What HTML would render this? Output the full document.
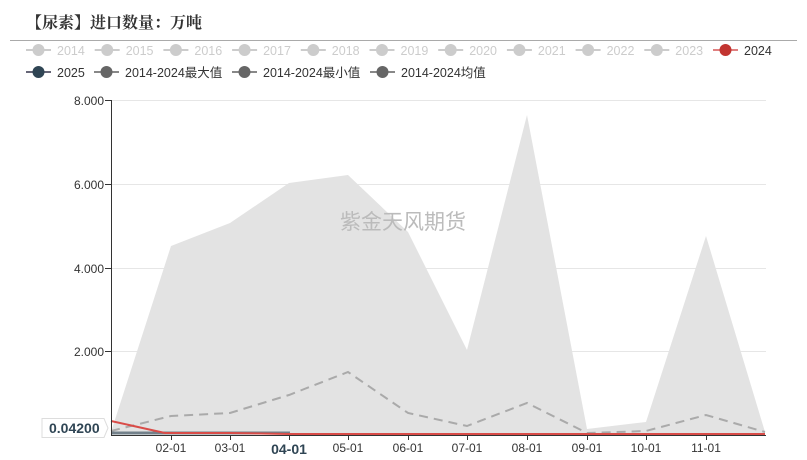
<!DOCTYPE html>
<html><head><meta charset="utf-8"><style>
body{margin:0;background:#fff;width:807px;height:460px;overflow:hidden}
svg{display:block;font-family:"Liberation Sans","Noto Sans CJK SC",sans-serif}
</style></head><body>
<svg width="807" height="460" viewBox="0 0 807 460">
<text x="26" y="28" font-size="16" font-weight="bold" fill="#333" font-family="Liberation Serif,Noto Serif CJK SC,serif">【尿素】进口数量：万吨</text>
<line x1="10" y1="40.5" x2="797" y2="40.5" stroke="#aaa" stroke-width="1"/>
<g font-size="12.5" fill="#ccc">
<g id="li"><line x1="26" y1="50" x2="51" y2="50" stroke="#ccc" stroke-width="2"/><circle cx="38.5" cy="50" r="6" fill="#ccc"/></g>
<text x="57" y="55">2014</text>
<use href="#li" x="68.7"/><text x="125.7" y="55">2015</text>
<use href="#li" x="137.4"/><text x="194.4" y="55">2016</text>
<use href="#li" x="206.1"/><text x="263.1" y="55">2017</text>
<use href="#li" x="274.8"/><text x="331.8" y="55">2018</text>
<use href="#li" x="343.5"/><text x="400.5" y="55">2019</text>
<use href="#li" x="412.2"/><text x="469.2" y="55">2020</text>
<use href="#li" x="480.9"/><text x="537.9" y="55">2021</text>
<use href="#li" x="549.6"/><text x="606.6" y="55">2022</text>
<use href="#li" x="618.3"/><text x="675.3" y="55">2023</text>
<line x1="713" y1="50" x2="738" y2="50" stroke="#e08080" stroke-width="2"/><circle cx="725.5" cy="50" r="6" fill="#c23531"/>
<text x="744" y="55" fill="#333">2024</text>
</g>
<g font-size="12.5" fill="#333">
<line x1="26" y1="72" x2="51" y2="72" stroke="#667" stroke-width="2"/><circle cx="38.5" cy="72" r="6" fill="#2f4554"/><text x="57" y="77">2025</text>
<line x1="94" y1="72" x2="119" y2="72" stroke="#888" stroke-width="2"/><circle cx="106.5" cy="72" r="6" fill="#666"/><text x="125" y="77">2014-2024最大值</text>
<line x1="232" y1="72" x2="257" y2="72" stroke="#888" stroke-width="2"/><circle cx="244.5" cy="72" r="6" fill="#666"/><text x="263" y="77">2014-2024最小值</text>
<line x1="370" y1="72" x2="395" y2="72" stroke="#888" stroke-width="2"/><circle cx="382.5" cy="72" r="6" fill="#666"/><text x="401" y="77">2014-2024均值</text>
</g>
<g stroke="#e6e6e6" stroke-width="1">
<line x1="111" y1="100.5" x2="766" y2="100.5"/><line x1="111" y1="184.5" x2="766" y2="184.5"/><line x1="111" y1="268.5" x2="766" y2="268.5"/><line x1="111" y1="351.5" x2="766" y2="351.5"/>
</g>
<g font-size="12" fill="#333" text-anchor="end">
<text x="104" y="105">8.000</text><text x="104" y="189">6.000</text><text x="104" y="273">4.000</text><text x="104" y="356">2.000</text>
</g>
<g stroke="#333"><line x1="105" y1="100.5" x2="111" y2="100.5"/><line x1="105" y1="184.5" x2="111" y2="184.5"/><line x1="105" y1="268.5" x2="111" y2="268.5"/><line x1="105" y1="351.5" x2="111" y2="351.5"/></g>
<polygon fill="#e3e3e3" points="111,432 171,246 230,223 289,183 348,175 408,232 467,350 527,115 587,429 646,422 706,236 765,432 765,434 111,434"/>
<text x="403" y="229" font-size="21" fill="#bbb" text-anchor="middle">紫金天风期货</text>
<polyline fill="none" stroke="#aaa" stroke-width="2" stroke-dasharray="9,6" points="111,431 171,416 230,413 289,395 348,372 408,413 467,426 527,403 587,433 646,431 706,415 765,432"/>
<polyline fill="none" stroke="#72808a" stroke-width="3" points="111,433 290,433"/>
<polyline fill="none" stroke="#d94c48" stroke-width="2" points="111,421 165,433 230,433 289,434 765,434"/>
<line x1="111.5" y1="100" x2="111.5" y2="435" stroke="#333"/>
<line x1="111" y1="435.5" x2="766" y2="435.5" stroke="#333"/>
<g stroke="#333"><line x1="171.5" y1="435" x2="171.5" y2="440"/><line x1="230.5" y1="435" x2="230.5" y2="440"/><line x1="289.5" y1="435" x2="289.5" y2="440"/><line x1="348.5" y1="435" x2="348.5" y2="440"/><line x1="408.5" y1="435" x2="408.5" y2="440"/><line x1="467.5" y1="435" x2="467.5" y2="440"/><line x1="527.5" y1="435" x2="527.5" y2="440"/><line x1="587.5" y1="435" x2="587.5" y2="440"/><line x1="646.5" y1="435" x2="646.5" y2="440"/><line x1="706.5" y1="435" x2="706.5" y2="440"/></g>
<g font-size="12" fill="#333" text-anchor="middle">
<text x="171" y="452">02-01</text><text x="230" y="452">03-01</text>
<text x="289" y="454" font-size="14" font-weight="bold" fill="#2f4554">04-01</text>
<text x="348" y="452">05-01</text><text x="408" y="452">06-01</text><text x="467" y="452">07-01</text><text x="527" y="452">08-01</text><text x="587" y="452">09-01</text><text x="646" y="452">10-01</text><text x="706" y="452">11-01</text>
</g>
<path d="M42,418.5 H104 L108,428 L104,437.5 H42 Z" fill="#fff" stroke="#ddd"/>
<text x="49" y="433" font-size="14" font-weight="bold" fill="#2f4554">0.04200</text>
</svg>
</body></html>
